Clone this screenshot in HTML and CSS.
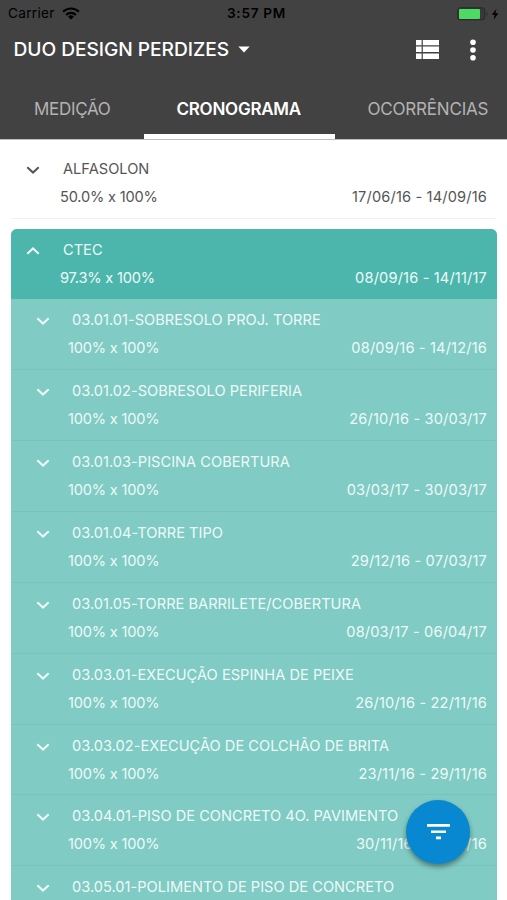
FILE: index.html
```html
<!DOCTYPE html>
<html lang="pt-BR">
<head>
<meta charset="utf-8">
<title>Cronograma</title>
<link rel="stylesheet" href="styles.css">
</head>
<body>
<svg class="defs" aria-hidden="true"><symbol id="down" viewBox="0 0 14 8"><path d="M1.3 1.2 7 6.6l5.7-5.4" fill="none" stroke="currentColor" stroke-width="2"/></symbol></svg>
<header class="header">
  <div class="status">
    <div class="carrier"><span>Carrier</span>
      <svg width="18" height="13" viewBox="0 0 18 13" fill="none" stroke="#000" stroke-width="2.1"><path d="M1.1 4.8a11.2 11.2 0 0 1 15.8 0M4.1 7.9a7 7 0 0 1 9.8 0"/><path d="M9 12.6 6.1 9.7a4.2 4.2 0 0 1 5.8 0z" fill="#000" stroke="none"/></svg>
    </div>
    <span class="time">3:57 PM</span>
    <svg class="battery" width="44" height="14" viewBox="0 0 44 14"><rect x=".8" y=".8" width="27" height="12" rx="2.5" fill="#383838" stroke="#292929"/><rect x="2" y="2" width="21" height="10" rx="1" fill="#4cd964"/><path d="M29.5 4.5q2 2.5 0 5z" fill="#292929"/><path d="m39.5 1.8-4.7 6h3l-1.1 5 4.7-6.5h-3.1z" fill="#000"/></svg>
  </div>
  <div class="toolbar">
    <h1 class="title">DUO DESIGN PERDIZES</h1>
    <svg class="caret" width="12" height="7" viewBox="0 0 12 7"><path d="M.3.4h11.4L6 6.6z" fill="#fff"/></svg>
    <svg class="list" width="23" height="19" viewBox="0 0 23 19" fill="#fff"><path d="M0 0h5.6v5.3H0zM6.8 0H23v5.3H6.8zM0 6.6h5.6v5.5H0zM6.8 6.6H23v5.5H6.8zM0 13.4h5.6V19H0zM6.8 13.4H23V19H6.8z"/></svg>
    <svg class="more" width="6" height="22" viewBox="0 0 6 22" fill="#fff"><circle cx="3" cy="3.2" r="2.8"/><circle cx="3" cy="11" r="2.8"/><circle cx="3" cy="18.8" r="2.8"/></svg>
  </div>
  <nav class="tabs">
    <span class="tab tab-med">MEDIÇÃO</span>
    <span class="tab active">CRONOGRAMA</span>
    <span class="tab tab-oco">OCORRÊNCIAS</span>
  </nav>
</header>
<main>
  <section class="row plain">
    <svg class="chev"><use href="#down"/></svg>
    <div class="name">ALFASOLON</div>
    <div class="info"><span>50.0% x 100%</span><span class="dates">17/06/16 - 14/09/16</span></div>
  </section>
  <section class="group">
    <div class="row head">
      <svg class="chev up"><use href="#down"/></svg>
      <div class="name">CTEC</div>
      <div class="info"><span>97.3% x 100%</span><span class="dates">08/09/16 - 14/11/17</span></div>
    </div>
    <div class="row sub"><svg class="chev"><use href="#down"/></svg><div class="name">03.01.01-SOBRESOLO PROJ. TORRE</div><div class="info"><span>100% x 100%</span><span class="dates">08/09/16 - 14/12/16</span></div></div>
    <div class="row sub"><svg class="chev"><use href="#down"/></svg><div class="name">03.01.02-SOBRESOLO PERIFERIA</div><div class="info"><span>100% x 100%</span><span class="dates">26/10/16 - 30/03/17</span></div></div>
    <div class="row sub"><svg class="chev"><use href="#down"/></svg><div class="name">03.01.03-PISCINA COBERTURA</div><div class="info"><span>100% x 100%</span><span class="dates">03/03/17 - 30/03/17</span></div></div>
    <div class="row sub"><svg class="chev"><use href="#down"/></svg><div class="name">03.01.04-TORRE TIPO</div><div class="info"><span>100% x 100%</span><span class="dates">29/12/16 - 07/03/17</span></div></div>
    <div class="row sub"><svg class="chev"><use href="#down"/></svg><div class="name">03.01.05-TORRE BARRILETE/COBERTURA</div><div class="info"><span>100% x 100%</span><span class="dates">08/03/17 - 06/04/17</span></div></div>
    <div class="row sub"><svg class="chev"><use href="#down"/></svg><div class="name">03.03.01-EXECUÇÃO ESPINHA DE PEIXE</div><div class="info"><span>100% x 100%</span><span class="dates">26/10/16 - 22/11/16</span></div></div>
    <div class="row sub"><svg class="chev"><use href="#down"/></svg><div class="name">03.03.02-EXECUÇÃO DE COLCHÃO DE BRITA</div><div class="info"><span>100% x 100%</span><span class="dates">23/11/16 - 29/11/16</span></div></div>
    <div class="row sub"><svg class="chev"><use href="#down"/></svg><div class="name">03.04.01-PISO DE CONCRETO 4O. PAVIMENTO</div><div class="info"><span>100% x 100%</span><span class="dates">30/11/16 - 27/12/16</span></div></div>
    <div class="row sub last"><svg class="chev"><use href="#down"/></svg><div class="name">03.05.01-POLIMENTO DE PISO DE CONCRETO</div></div>
  </section>
</main>
<button class="fab" aria-label="Filtrar"><svg width="23" height="16" viewBox="0 0 23 16" fill="#fff"><path d="M0 0h23v2.7H0zM4 6.4h15v2.7H4zM9 12.6h5v2.6H9z"/></svg></button>
</body>
</html>
```
FILE: styles.css
```css
* { box-sizing: border-box; }
body { margin: 0; width: 507px; height: 900px; overflow: hidden; background: #fff; font-family: Inter, "Liberation Sans", sans-serif; font-size: 14.6px; white-space: nowrap; }
.defs { position: absolute; width: 0; height: 0; }
svg { display: block; flex: none; }
.header { height: 140px; background: #424242; color: #fff; border-bottom: 1px solid #bdbdbd; display: flex; flex-direction: column; }
.status { height: 27px; padding: 0 6px 0 8px; display: grid; grid-template-columns: 1fr auto 1fr; align-items: center; color: #000; font-size: 13.6px; line-height: 27px; }
.carrier { display: flex; align-items: center; gap: 7px; letter-spacing: .3px; }
.time { font-weight: 600; letter-spacing: .7px; padding-left: 4px; }
.battery { justify-self: end; }
.toolbar { height: 45px; display: flex; align-items: center; padding: 0 31px 0 13.5px; }
.title { margin: 0; font-size: 19.2px; font-weight: 500; line-height: 45px; letter-spacing: -.05px; }
.caret { margin-left: 9px; }
.list { margin-left: auto; }
.more { margin-left: 31px; }
.tabs { height: 67px; display: grid; grid-template-columns: 143.5px 191.5px 172px; font-size: 17px; line-height: 75px; color: #b3b3b3; letter-spacing: -.3px; }
.tab { height: 67px; overflow: hidden; }
.tab-med { padding-left: 34px; }
.tab-oco { padding-left: 32.5px; letter-spacing: -.2px; }
.active { padding-left: 33px; color: #fff; font-weight: 600; letter-spacing: -.25px; border-bottom: 5px solid #fff; }
main { padding-top: 8px; }
.row { height: 70.86px; display: grid; grid-template-columns: 52px 1fr; grid-template-rows: 43px 1fr; }
.chev { width: 14px; height: 8px; margin: 18px 0 0 14.5px; }
.up { transform: rotate(180deg); }
.name { line-height: 43.2px; letter-spacing: .02px; }
.info { grid-column: 1 / -1; display: flex; justify-content: space-between; line-height: 13.2px; padding: 0 10px 0 49px; letter-spacing: -.2px; }
.dates { letter-spacing: .16px; }
.plain { height: 70.5px; margin: 0 11px 10px; color: #555; border-bottom: 1px solid #f0f0f0; }
.plain .info { padding-right: 9px; }
.group { margin: 0 10px 0 11px; border-radius: 6px 6px 0 0; overflow: hidden; color: #eefaf8; background: #80cbc4; }
.head { background: #4db6ac; }
.sub { grid-template-columns: 61px 1fr; border-bottom: 1px solid #78c3bc; }
.sub .chev { margin-left: 24.5px; }
.sub .info { padding-left: 57px; }
.last { height: 33.76px; border-bottom: 0; grid-template-rows: 33.76px; }
.last .name { height: 33px; }
.fab { position: absolute; left: 406px; top: 799.5px; width: 64px; height: 64px; border: 0; padding: 0; border-radius: 50%; background: #0788d1; display: grid; place-items: center; box-shadow: 0 3px 5px rgba(0,0,0,.4); }
```
